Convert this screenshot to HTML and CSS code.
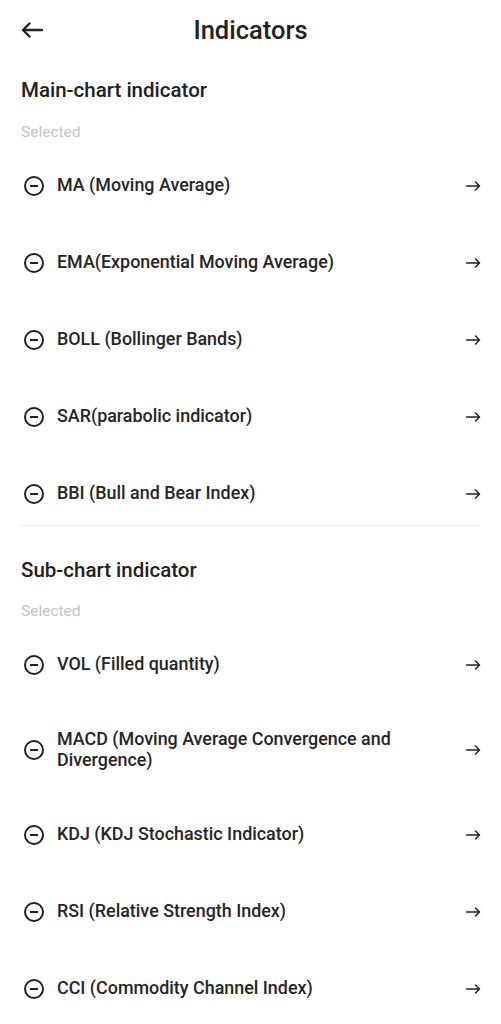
FILE: index.html
```html
<!DOCTYPE html>
<html>
<head>
<meta charset="utf-8">
<link rel="stylesheet" href="styles.css">
</head>
<body>
<header class="topbar">
  <svg class="back" width="22" height="16" viewBox="0 0 22 16"><path d="M21 8H2M8.5 1.5L2 8l6.5 6.5" fill="none" stroke="#222" stroke-width="2.4" stroke-linecap="round" stroke-linejoin="round"/></svg>
  <h1 class="title">Indicators</h1>
</header>

<section class="section">
  <h2 class="sec-title">Main-chart indicator</h2>
  <div class="sub">Selected</div>
  <ul class="list">
    <li class="row"><span class="minus"></span><span class="name">MA (Moving Average)</span><svg class="arrow" width="15" height="10" viewBox="0 0 15 10"><path d="M0.5 5H13.5M9.5 1L13.5 5L9.5 9" fill="none" stroke="#222" stroke-width="1.5" stroke-linecap="round" stroke-linejoin="round"/></svg></li>
    <li class="row"><span class="minus"></span><span class="name">EMA(Exponential Moving Average)</span><svg class="arrow" width="15" height="10" viewBox="0 0 15 10"><path d="M0.5 5H13.5M9.5 1L13.5 5L9.5 9" fill="none" stroke="#222" stroke-width="1.5" stroke-linecap="round" stroke-linejoin="round"/></svg></li>
    <li class="row"><span class="minus"></span><span class="name">BOLL (Bollinger Bands)</span><svg class="arrow" width="15" height="10" viewBox="0 0 15 10"><path d="M0.5 5H13.5M9.5 1L13.5 5L9.5 9" fill="none" stroke="#222" stroke-width="1.5" stroke-linecap="round" stroke-linejoin="round"/></svg></li>
    <li class="row"><span class="minus"></span><span class="name">SAR(parabolic indicator)</span><svg class="arrow" width="15" height="10" viewBox="0 0 15 10"><path d="M0.5 5H13.5M9.5 1L13.5 5L9.5 9" fill="none" stroke="#222" stroke-width="1.5" stroke-linecap="round" stroke-linejoin="round"/></svg></li>
    <li class="row"><span class="minus"></span><span class="name">BBI (Bull and Bear Index)</span><svg class="arrow" width="15" height="10" viewBox="0 0 15 10"><path d="M0.5 5H13.5M9.5 1L13.5 5L9.5 9" fill="none" stroke="#222" stroke-width="1.5" stroke-linecap="round" stroke-linejoin="round"/></svg></li>
  </ul>
</section>
<div class="divider"></div>
<section class="section second">
  <h2 class="sec-title">Sub-chart indicator</h2>
  <div class="sub">Selected</div>
  <ul class="list">
    <li class="row"><span class="minus"></span><span class="name">VOL (Filled quantity)</span><svg class="arrow" width="15" height="10" viewBox="0 0 15 10"><path d="M0.5 5H13.5M9.5 1L13.5 5L9.5 9" fill="none" stroke="#222" stroke-width="1.5" stroke-linecap="round" stroke-linejoin="round"/></svg></li>
    <li class="row"><span class="minus"></span><span class="name">MACD (Moving Average Convergence and Divergence)</span><svg class="arrow" width="15" height="10" viewBox="0 0 15 10"><path d="M0.5 5H13.5M9.5 1L13.5 5L9.5 9" fill="none" stroke="#222" stroke-width="1.5" stroke-linecap="round" stroke-linejoin="round"/></svg></li>
    <li class="row"><span class="minus"></span><span class="name">KDJ (KDJ Stochastic Indicator)</span><svg class="arrow" width="15" height="10" viewBox="0 0 15 10"><path d="M0.5 5H13.5M9.5 1L13.5 5L9.5 9" fill="none" stroke="#222" stroke-width="1.5" stroke-linecap="round" stroke-linejoin="round"/></svg></li>
    <li class="row"><span class="minus"></span><span class="name">RSI (Relative Strength Index)</span><svg class="arrow" width="15" height="10" viewBox="0 0 15 10"><path d="M0.5 5H13.5M9.5 1L13.5 5L9.5 9" fill="none" stroke="#222" stroke-width="1.5" stroke-linecap="round" stroke-linejoin="round"/></svg></li>
    <li class="row"><span class="minus"></span><span class="name">CCI (Commodity Channel Index)</span><svg class="arrow" width="15" height="10" viewBox="0 0 15 10"><path d="M0.5 5H13.5M9.5 1L13.5 5L9.5 9" fill="none" stroke="#222" stroke-width="1.5" stroke-linecap="round" stroke-linejoin="round"/></svg></li>
  </ul>
</section>
</body>
</html>
```

FILE: styles.css
```css
* { box-sizing: border-box; }
html, body { margin: 0; padding: 0; background: #fff; }
body {
  font-family: Roboto, "Liberation Sans", sans-serif;
  color: #222;
  width: 501px;
  overflow: hidden;
}
.topbar {
  position: relative;
  height: 60px;
  display: flex;
  align-items: center;
  justify-content: center;
}
.back {
  position: absolute;
  left: 21px;
  top: 22px;
}
.title {
  margin: 0;
  font-size: 25.5px;
  font-weight: 500;
  color: #222;
}
.section { padding: 0 20px 0 21px; }
.sec-title {
  margin: 18px 0 0;
  font-size: 20.5px;
  font-weight: 500;
  line-height: 24px;
  color: #222;
}
.second .sec-title { margin-top: 32px; }
.sub {
  margin-top: 21px;
  font-size: 15.5px;
  line-height: 18px;
  color: #c4c4c4;
}
.second .sub { margin-top: 20px; }
.list { list-style: none; margin: 6px 0 0; padding: 0; }
.row {
  display: flex;
  align-items: center;
  min-height: 77px;
  padding: 26px 0;
}
.minus {
  position: relative;
  flex: none;
  width: 20px;
  height: 20px;
  border: 2px solid #222;
  border-radius: 50%;
  margin: 0 13px 0 3px;
}
.minus::after {
  content: "";
  position: absolute;
  left: 4px;
  top: 7px;
  width: 8px;
  height: 2px;
  background: #222;
}
.name {
  flex: 1;
  font-size: 17.9px;
  font-weight: 500;
  line-height: 20.5px;
  color: #262626;
  padding-right: 40px;
}
.arrow {
  flex: none;
  display: block;
  margin-right: 0;
}
.divider {
  height: 1px;
  background: #f0f0f0;
  margin: -7px 20px 0 20px;
}
```
